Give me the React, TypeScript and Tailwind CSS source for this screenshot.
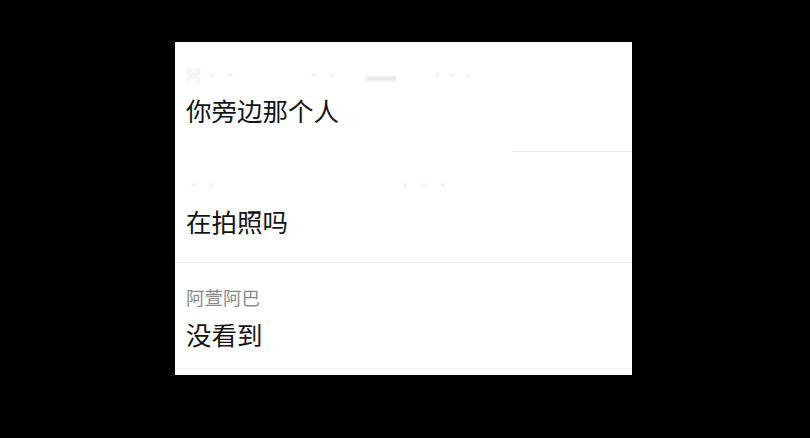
const font = { fontFamily: '"Noto Sans CJK SC", "Noto Sans", sans-serif' }

function Ghost({ parts }: { parts: { w: string; text: string }[] }) {
  return (
    <div className="flex h-[24px] items-center text-[15px] leading-[24px] text-[#e9e9e9] blur-[1px]">
      {parts.map((p, i) => (
        <span key={i} className={p.w}>
          {p.text}
        </span>
      ))}
    </div>
  )
}

export default function App() {
  return (
    <div className="h-[438px] w-[810px] bg-black pl-[175px] pt-[42px]" style={font}>
      <div className="flex h-[333px] w-[457px] flex-col bg-white">
        {/* row 1 */}
        <div className="relative h-[110px] pl-[11px] pt-[21px]">
          <Ghost
            parts={[
              { w: "w-[120px]", text: "阿 ·  ·" },
              { w: "w-[60px]", text: "· ·" },
              { w: "w-[64px]", text: "▬▬" },
              { w: "w-[40px]", text: "···" },
            ]}
          />
          <div className="mt-[7px] text-[25.5px] leading-[32px] text-[#141414]">你旁边那个人</div>
          <div className="absolute bottom-0 right-0 h-px w-[120px] bg-[#ececec]" />
        </div>
        {/* row 2 */}
        <div className="h-[111px] border-b border-[#ebebeb] pl-[11px] pt-[21px]">
          <Ghost
            parts={[
              { w: "w-[212px]", text: "· ·" },
              { w: "w-[60px]", text: "· · ·" },
            ]}
          />
          <div className="mt-[8px] text-[25.5px] leading-[32px] text-[#141414]">在拍照吗</div>
        </div>
        {/* row 3 */}
        <div className="h-[106px] border-b border-[#f3f3f3] pl-[11px] pt-[22px]">
          <div className="h-[24px] text-[18.5px] leading-[24px] text-[#8a8a8a]">阿萱阿巴</div>
          <div className="mt-[9px] text-[25.5px] leading-[32px] text-[#141414]">没看到</div>
        </div>
      </div>
    </div>
  )
}
